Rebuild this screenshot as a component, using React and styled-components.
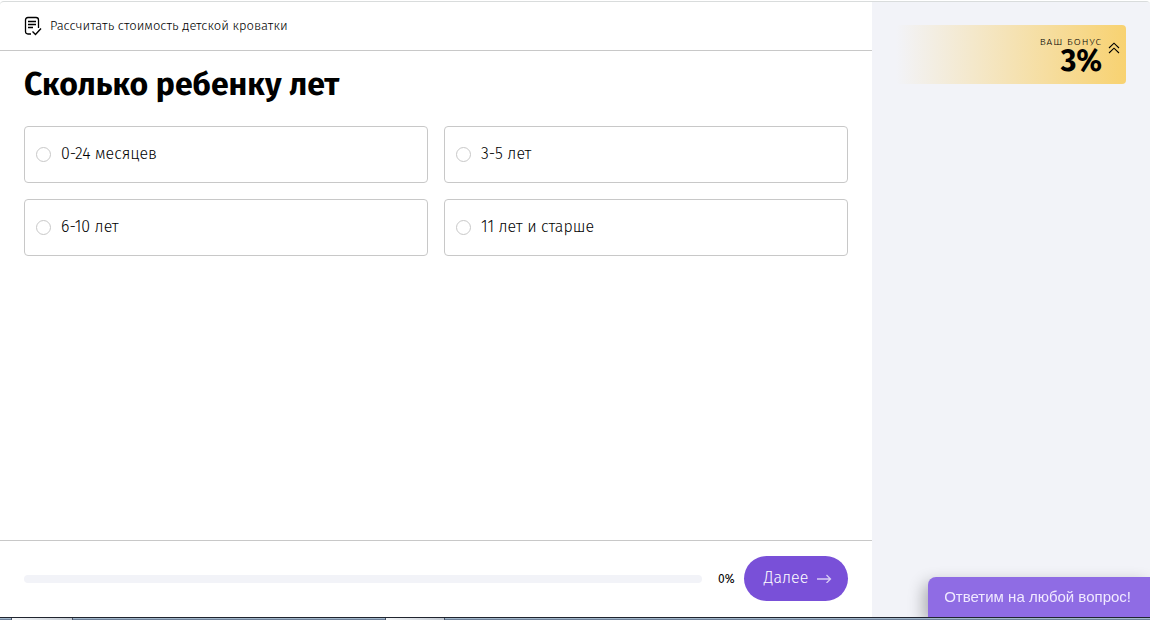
import React from "react";
import styled, { createGlobalStyle } from "styled-components";

const GlobalStyle = createGlobalStyle`
  *, *::before, *::after { box-sizing: border-box; }
  body {
    margin: 0;
    background: #fff;
    color: #000;
    font-family: "Fira Sans", "Open Sans", "Noto Sans", sans-serif;
  }
  button, input { font: inherit; }
`;

const Window = styled.div`
  min-height: 100vh;
  display: flex;
  flex-direction: column;
  padding-top: 1px;
`;

const Quiz = styled.div`
  flex: 1;
  display: flex;
  border-top: 1px solid #d9dcdc;
  border-radius: 4px 4px 0 0;
  overflow: hidden;
`;

const Main = styled.main`
  flex: 1;
  min-width: 0;
  display: flex;
  flex-direction: column;
`;

const Header = styled.header`
  display: flex;
  align-items: center;
  gap: 8px;
  height: 49px;
  padding: 0 24px;
  border-bottom: 1px solid #c8c8c8;
  font-size: 13px;
  line-height: 16px;
  font-weight: 300;
`;

const Question = styled.fieldset`
  flex: 1;
  margin: 0;
  padding: 0 24px;
  border: 0;
`;

const Title = styled.legend`
  padding: 12px 0 20px;
  font-size: 32px;
  line-height: 43px;
  font-weight: 700;
`;

const Options = styled.div`
  display: grid;
  grid-template-columns: 1fr 1fr;
  gap: 16px;
`;

const Option = styled.label`
  display: flex;
  align-items: center;
  gap: 10px;
  padding: 15px 11px 16px;
  border: 1px solid #c8c8c8;
  border-radius: 4px;
  font-size: 16px;
  line-height: 24px;
  font-weight: 300;
  cursor: pointer;
`;

const Radio = styled.input`
  appearance: none;
  width: 15px;
  height: 15px;
  margin: 0;
  border: 1px solid #c8c8c8;
  border-radius: 50%;
  background: #fff;

  &:checked { border: 5px solid #7950d8; }
`;

const Footer = styled.footer`
  display: flex;
  align-items: center;
  padding: 15px 24px 16px;
  border-top: 1px solid #c8c8c8;
`;

const Progress = styled.div`
  flex: 1;
  height: 8px;
  border-radius: 4px;
  background: #f2f3f8;
  overflow: hidden;
`;

const Bar = styled.div`
  height: 100%;
  background: #7950d8;
`;

const Percent = styled.span`
  width: 42px;
  padding: 0 0 0 16px;
  font-size: 12px;
  line-height: 16px;
`;

const NextButton = styled.button`
  display: flex;
  align-items: center;
  justify-content: center;
  gap: 8px;
  width: 104px;
  height: 45px;
  padding: 0 0 2px 4px;
  border: 0;
  border-radius: 23px;
  background: #7950d8;
  color: #fff;
  font-size: 16px;
  line-height: 24px;
  font-weight: 300;
  cursor: pointer;
`;

const Sidebar = styled.aside`
  width: 278px;
  padding: 23px 24px;
  background: #f2f3f8;
`;

const Bonus = styled.button`
  display: flex;
  align-items: center;
  justify-content: flex-end;
  gap: 6px;
  width: 100%;
  height: 59px;
  padding: 2px 6px 0 0;
  border: 0;
  border-radius: 4px;
  background: linear-gradient(90deg, #f2f3f8 0%, #f8d271 100%);
  color: #000;
  text-align: right;
  cursor: pointer;
`;

const BonusText = styled.span`
  display: flex;
  flex-direction: column;
`;

const BonusLabel = styled.span`
  font-size: 10px;
  line-height: 10px;
  font-weight: 300;
  letter-spacing: 1px;
  text-transform: uppercase;
`;

const BonusValue = styled.strong`
  font-size: 30px;
  line-height: 28px;
  font-weight: 700;
`;

const ChevronIcon = styled.svg`
  margin-bottom: 15px;
`;

const Chat = styled.button`
  position: fixed;
  right: 0;
  bottom: 3px;
  height: 40px;
  padding: 0 19px 0 16px;
  border: 0;
  border-radius: 8px 0 0 0;
  background: #8f6ce4;
  box-shadow: -4px 6px 16px rgba(0, 0, 0, 0.3);
  clip-path: inset(-24px 0 0 -24px);
  color: #f0e9ff;
  font-family: "Liberation Sans", Arial, sans-serif;
  font-size: 15px;
  line-height: 20px;
  white-space: nowrap;
  cursor: pointer;
`;

const Taskbar = styled.div`
  display: flex;
  height: 3px;
  border-top: 1px solid #20242e;
  background: linear-gradient(#a2b8cb 50%, #6f819a 50%);
`;

const TaskbarTab = styled.div`
  width: ${(p) => p.$width}px;
  margin-left: ${(p) => p.$offset}px;
  border: solid #4a5364;
  border-width: 0 1px;
  background: linear-gradient(90deg, #f4f6f8, #c3cad3);
`;

const options = ["0-24 месяцев", "3-5 лет", "6-10 лет", "11 лет и старше"];
const progress = 0;

export default function App() {
  return (
    <>
      <GlobalStyle />
      <Window>
        <Quiz>
          <Main>
            <Header>
              <svg width="18" height="20" viewBox="0 0 18 20" fill="none" stroke="#000" aria-hidden="true">
                <path d="M7 18H4Q1.5 18 1.5 15.5V4Q1.5 1.5 4 1.5H12Q14.5 1.5 14.5 4V12" strokeWidth="1.3" />
                <path d="M4 5.5H12M4 8.5H12M4 11.5H9" strokeWidth="1.3" />
                <path d="M8.5 15.5L11.5 18.5L17 12.5" strokeWidth="1.4" />
              </svg>
              <span>Рассчитать стоимость детской кроватки</span>
            </Header>
            <Question>
              <Title>Сколько ребенку лет</Title>
              <Options>
                {options.map((text) => (
                  <Option key={text}>
                    <Radio type="radio" name="age" value={text} />
                    <span>{text}</span>
                  </Option>
                ))}
              </Options>
            </Question>
            <Footer>
              <Progress role="progressbar" aria-label="Прогресс" aria-valuenow={progress}>
                <Bar style={{ width: `${progress}%` }} />
              </Progress>
              <Percent>{progress}%</Percent>
              <NextButton type="button">
                Далее
                <svg width="16" height="10" viewBox="0 0 16 10" fill="none" stroke="#d9cdf5" strokeWidth="1.3" aria-hidden="true">
                  <path d="M1 6H14.5M10.5 2L14.5 6L10.5 10" />
                </svg>
              </NextButton>
            </Footer>
          </Main>
          <Sidebar>
            <Bonus type="button">
              <BonusText>
                <BonusLabel>Ваш бонус</BonusLabel>
                <BonusValue>3%</BonusValue>
              </BonusText>
              <ChevronIcon width="12" height="12" viewBox="0 0 12 12" fill="none" stroke="#000" strokeWidth="1.1" aria-hidden="true">
                <path d="M1 6L6 1.2L11 6M1 11L6 6.2L11 11" />
              </ChevronIcon>
            </Bonus>
          </Sidebar>
        </Quiz>
        <Taskbar>
          <TaskbarTab $offset={11} $width={62} />
          <TaskbarTab $offset={312} $width={60} />
        </Taskbar>
      </Window>
      <Chat type="button">Ответим на любой вопрос!</Chat>
    </>
  );
}
